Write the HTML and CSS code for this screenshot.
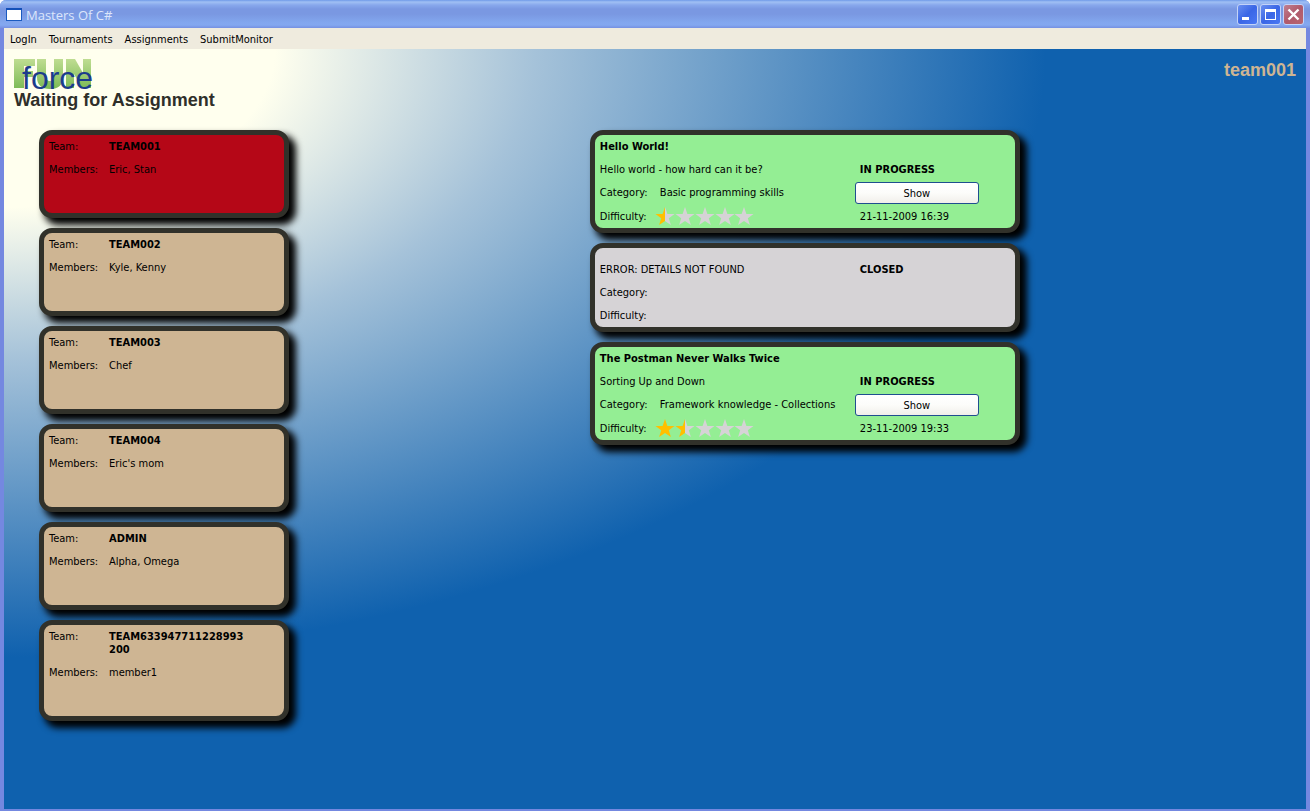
FILE: index.html
```html
<!DOCTYPE html>
<html lang="en">
<head>
<meta charset="utf-8">
<title>Masters Of C#</title>
<link rel="stylesheet" href="styles.css">
</head>
<body>
<svg class="defs" aria-hidden="true">
  <defs>
    <linearGradient id="half"><stop offset="50%" stop-color="#ffbf00"/><stop offset="50%" stop-color="#d6d3d6"/></linearGradient>
    <path id="star" d="M10 0 L12.4 6.9 L19.5 7 L13.8 11.3 L15.9 18 L10 14 L4.1 18 L6.2 11.3 L0.5 7 L7.6 6.9 Z"/>
  </defs>
</svg>
<div class="window">
  <header class="titlebar">
    <svg class="app-icon" viewBox="0 0 16 13" aria-hidden="true">
      <rect x="0.5" y="0.5" width="15" height="12" fill="#fff" stroke="#1a5ac0"/>
      <path d="M0 1 H16" stroke="#1450b8" stroke-width="2"/>
    </svg>
    <h1 class="title">Masters Of C#</h1>
    <div class="controls">
      <button class="control" type="button" aria-label="Minimize"><svg viewBox="0 0 19 19"><path d="M4 12 h7 v3 h-7 z" fill="#fff"/></svg></button>
      <button class="control" type="button" aria-label="Maximize"><svg viewBox="0 0 19 19"><path d="M4 4 h11 v11 h-11 z M5 7 v7 h9 v-7 z" fill="#fff" fill-rule="evenodd"/></svg></button>
      <button class="control control-close" type="button" aria-label="Close"><svg viewBox="0 0 19 19"><path d="M4.5 4.5 L14.5 14.5 M14.5 4.5 L4.5 14.5" stroke="#fff" stroke-width="2.4"/></svg></button>
    </div>
  </header>
  <nav class="menu">
    <a href="#login">LogIn</a>
    <a href="#tournaments">Tournaments</a>
    <a href="#assignments">Assignments</a>
    <a href="#monitor">SubmitMonitor</a>
  </nav>
  <main class="client">
    <div class="top">
      <div>
        <div class="logo">
          <svg class="logo-fun" viewBox="0 0 77 30" role="img" aria-label="FUN">
            <defs><linearGradient id="leaf" x1="0" y1="0" x2="0" y2="1"><stop offset="0" stop-color="#bfdd92"/><stop offset="1" stop-color="#7cba55"/></linearGradient></defs>
            <path fill="url(#leaf)" d="M0 0 H21 V7 H10 V12 H19 V18 H10 V29 H0 Z M23 0 H32 V18 Q32 22 36 22 Q40 22 40 18 V0 H49 V18 Q49 30 36 30 Q23 30 23 18 Z M52 0 H61 L69 14 V0 H77 V29 H68 L60 15 V29 H52 Z"/>
          </svg>
          <span class="logo-force">force</span>
        </div>
        <h2 class="status">Waiting for Assignment</h2>
      </div>
      <p class="user">team001</p>
    </div>
    <div class="columns">
      <section class="stack teams">
        <dl class="card team current"><dt>Team:</dt><dd class="name">TEAM001</dd><dt>Members:</dt><dd>Eric, Stan</dd></dl>
        <dl class="card team"><dt>Team:</dt><dd class="name">TEAM002</dd><dt>Members:</dt><dd>Kyle, Kenny</dd></dl>
        <dl class="card team"><dt>Team:</dt><dd class="name">TEAM003</dd><dt>Members:</dt><dd>Chef</dd></dl>
        <dl class="card team"><dt>Team:</dt><dd class="name">TEAM004</dd><dt>Members:</dt><dd>Eric's mom</dd></dl>
        <dl class="card team"><dt>Team:</dt><dd class="name">ADMIN</dd><dt>Members:</dt><dd>Alpha, Omega</dd></dl>
        <dl class="card team"><dt>Team:</dt><dd class="name">TEAM633947711228993200</dd><dt>Members:</dt><dd>member1</dd></dl>
      </section>
      <section class="stack assignments">
        <article class="card task open">
          <h3 class="wide">Hello World!</h3>
          <p class="summary">Hello world - how hard can it be?</p><p class="state">IN PROGRESS</p>
          <p>Category:</p><p>Basic programming skills</p><button class="show" type="button">Show</button>
          <p>Difficulty:</p>
          <svg class="stars" viewBox="0 0 100 19" role="img" aria-label="Half of 5 stars">
            <use href="#star" fill="url(#half)"/><use href="#star" x="20" fill="#d6d3d6"/><use href="#star" x="40" fill="#d6d3d6"/><use href="#star" x="60" fill="#d6d3d6"/><use href="#star" x="79" fill="#d6d3d6"/>
          </svg>
          <p>21-11-2009 16:39</p>
        </article>
        <article class="card task closed">
          <h3 class="wide"></h3>
          <p class="summary">ERROR: DETAILS NOT FOUND</p><p class="state">CLOSED</p>
          <p class="wide">Category:</p>
          <p class="wide">Difficulty:</p>
        </article>
        <article class="card task open">
          <h3 class="wide">The Postman Never Walks Twice</h3>
          <p class="summary">Sorting Up and Down</p><p class="state">IN PROGRESS</p>
          <p>Category:</p><p>Framework knowledge - Collections</p><button class="show" type="button">Show</button>
          <p>Difficulty:</p>
          <svg class="stars" viewBox="0 0 100 19" role="img" aria-label="One and a half of 5 stars">
            <use href="#star" fill="#ffbf00"/><use href="#star" x="20" fill="url(#half)"/><use href="#star" x="40" fill="#d6d3d6"/><use href="#star" x="60" fill="#d6d3d6"/><use href="#star" x="79" fill="#d6d3d6"/>
          </svg>
          <p>23-11-2009 19:33</p>
        </article>
      </section>
    </div>
  </main>
</div>
</body>
</html>
```
FILE: styles.css
```css
* { box-sizing: border-box; }
body {
  margin: 0;
  background: #fff;
  color: #000;
  font: 11px/13px "DejaVu Sans Condensed", "DejaVu Sans", sans-serif;
}
h1, h2, h3, p, dl, dd { margin: 0; font-size: inherit; }
.defs { position: absolute; width: 0; height: 0; }

.window {
  display: flex;
  flex-direction: column;
  min-height: 100vh;
  border: solid #7488e0;
  border-width: 0 4px 2px;
  border-radius: 6px 6px 0 0;
}

.titlebar {
  display: flex;
  align-items: center;
  height: 28px;
  margin: 0 -4px;
  padding: 1px 6px 0;
  border-radius: 6px 6px 0 0;
  background: linear-gradient(#6f9ae8 0, #a0c0f4 2px, #88a8ec 5px, #7a98e2 9px, #7a98e2 14px, #82a6ee 22px, #84a8f0 25px, #7590e2 28px);
}
.app-icon { width: 16px; height: 13px; }
.title {
  flex: 1;
  padding-left: 4px;
  color: #dce6fb;
  font: 500 13px/18px "Open Sans", sans-serif;
}
.controls { display: flex; gap: 2px; }
.control {
  width: 21px;
  height: 21px;
  padding: 0;
  border: 1px solid #c3d3f8;
  border-radius: 3px;
  background: linear-gradient(135deg, #6a90f0, #3a66e6 50%, #4a78f4);
}
.control-close { background: linear-gradient(135deg, #c08090, #b05a6c 50%, #b8646e); }
.control svg { display: block; width: 19px; height: 19px; }

.menu {
  display: flex;
  gap: 12px;
  padding: 5px 6px 3px;
  background: #efebde;
}
.menu a { color: #000; text-decoration: none; }

.client {
  flex: 1;
  padding: 10px 10px 40px;
  background: #0f61ae radial-gradient(ellipse 80% 80% at 0 0, #ffffee 0, #ffffee 26%, #a5c2d9 51%, #0f61ae 100%);
}
.top {
  display: flex;
  justify-content: space-between;
  height: 71px;
  color: #2f2f2a;
  font: bold 18px/20px "Liberation Sans", Arial, sans-serif;
}
.logo { display: grid; height: 31px; }
.logo > * { grid-area: 1 / 1; }
.logo-fun { width: 77px; height: 30px; }
.logo-force {
  padding-left: 8px;
  color: #1c3c8c;
  font: 32px/38px "Liberation Sans", Arial, sans-serif;
}
.user { padding-top: 1px; color: #ceb593; }

.columns {
  display: grid;
  grid-template-columns: 10fr 13fr;
  margin: 0 -10px 0 25px;
}
.stack { display: flex; flex-direction: column; align-items: flex-start; gap: 10px; }
.card {
  display: grid;
  align-content: start;
  border: 5px solid #31312a;
  border-radius: 13px;
  box-shadow: 6px 6px 7px 1px #000;
}
.team {
  grid-template-columns: 60px 150px;
  width: 250px;
  padding-bottom: 32px;
  background: #ceb593;
}
.current { background: #b50717; }
.team > * { padding: 5px; overflow-wrap: anywhere; }
.name { font-weight: bold; }

.task { grid-template-columns: 60px 200px 124px; width: 430px; }
.task > h3, .task > p { padding: 5px; }
.open { background: #94ee94; }
.closed { background: #d6d3d6; }
.wide { grid-column: 1 / -1; }
.summary { grid-column: span 2; }
.state { font-weight: bold; }
.show {
  height: 22px;
  margin: 1px 0;
  padding: 0;
  border: 1px solid #1f4f8f;
  border-radius: 3px;
  background: linear-gradient(#fff, #fcfcfa 50%, #f1efea);
  color: #000;
  font: inherit;
}
.stars { display: block; width: 100px; height: 19px; margin-top: 2px; }
```
